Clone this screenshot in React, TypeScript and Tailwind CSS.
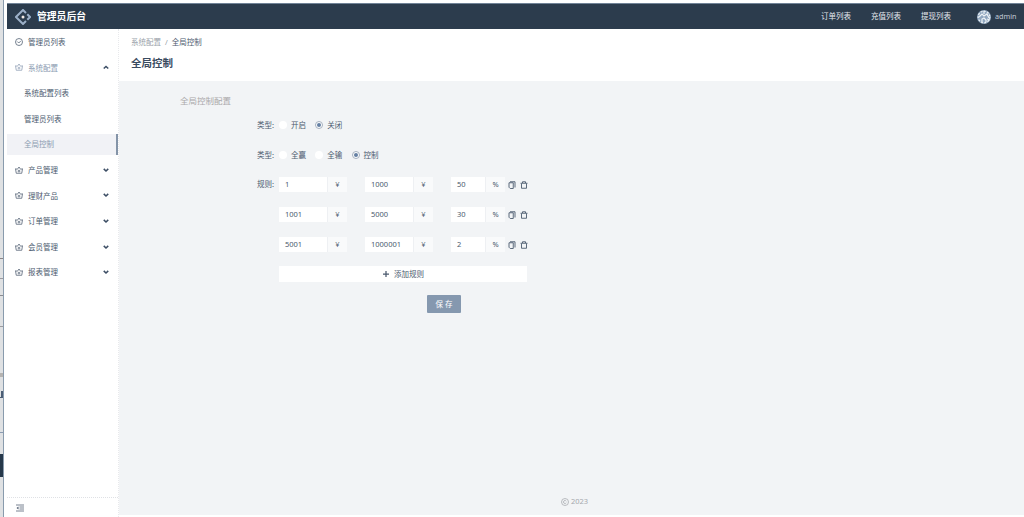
import { useState } from 'react'
import type { ReactNode } from 'react'
import clsx from 'clsx'

interface MenuItem {
  label: string
  active?: boolean
  open?: boolean
  children?: MenuItem[]
}

interface Rule {
  from: string
  to: string
  rate: string
}

const MENU: MenuItem[] = [
  {
    label: '系统配置',
    active: true,
    open: true,
    children: [
      { label: '系统配置列表' },
      { label: '管理员列表' },
      { label: '全局控制', active: true },
    ],
  },
  { label: '产品管理' },
  { label: '理财产品' },
  { label: '订单管理' },
  { label: '会员管理' },
  { label: '报表管理' },
]

const NAV = ['订单列表', '充值列表', '提现列表']

const INITIAL_RULES: Rule[] = [
  { from: '1', to: '1000', rate: '50' },
  { from: '1001', to: '5000', rate: '30' },
  { from: '5001', to: '1000001', rate: '2' },
]

function Icon({ className, children }: { className: string; children: ReactNode }) {
  return (
    <svg
      viewBox="0 0 16 16"
      fill="none"
      stroke="currentColor"
      strokeWidth="1.5"
      className={clsx('shrink-0', className)}
    >
      {children}
    </svg>
  )
}

function CrownIcon() {
  return (
    <Icon className="h-2 w-2">
      <path d="M2.5 14.5h11L15 5.5l-3.8 1L8 2 4.8 6.5 1 5.5z" />
      <circle cx="8" cy="10.2" r="1.8" />
    </Icon>
  )
}

function Chevron({ up }: { up?: boolean }) {
  return (
    <Icon className="h-1.5 w-1.5">
      <path d={up ? 'M2 12l6-5.500L14 12' : 'M2 5l6 5.500L14 5'} strokeWidth="4" />
    </Icon>
  )
}

function Header() {
  return (
    <header className="flex h-[26px] shrink-0 items-center border-t border-[#718397] bg-[#2c3c4d] pr-2 pl-2 text-[#e4e8ed]">
      <Icon className="h-4 w-4 text-[#9cb0c8]">
        <path d="M11 4L8 1 1 8l7 7 3-3M12.3 5.3L15 8l-2.7 2.7" strokeWidth="2" />
        <circle cx="8" cy="8" r="1.5" fill="#f3e9e4" stroke="none" />
      </Icon>
      <span className="ml-1.5 pt-px text-[9.8px] font-bold text-white">管理员后台</span>
      <nav className="ml-auto flex gap-5">
        {NAV.map((label) => (
          <a key={label}>{label}</a>
        ))}
      </nav>
      <div className="ml-[26px] flex w-[39px] items-center gap-1">
        <svg viewBox="0 0 14 14" className="h-3.5 w-3.5 shrink-0">
          <circle cx="7" cy="7" r="7" fill="#8fa6bf" />
          <g fill="none" stroke="#edf2f6" strokeWidth="1.2">
            <circle cx="7" cy="7" r="5.8" strokeDasharray="2 1.3" />
            <path d="M2 7l3-3 2 2 3-2 2 4M5 12V9l2-1 2 2v2M7 1v3M10 9l3 1" />
          </g>
        </svg>
        <span className="text-[7.2px] text-[#c2cbd6]">admin</span>
      </div>
    </header>
  )
}

function Sidebar() {
  return (
    <aside className="flex w-[112px] shrink-0 flex-col border-r border-dotted border-[#e8e9ec] bg-white">
      <div className="flex h-[25.6px] items-center gap-[5px] pl-2">
        <Icon className="h-2 w-2">
          <circle cx="8" cy="8" r="7" />
          <path d="M4.5 7l3 3 4-4" />
        </Icon>
        <span className="pt-0.5">管理员列表</span>
      </div>
      {MENU.map((item) => (
        <div key={item.label}>
          <div
            className={clsx(
              'flex h-[25.6px] items-center gap-[5px] pr-[9px] pl-2',
              item.active && 'text-[#8b9bb1]',
            )}
          >
            <CrownIcon />
            <span className="pt-0.5">{item.label}</span>
            <span className="ml-auto text-[#3b4d64]">
              <Chevron up={item.open} />
            </span>
          </div>
          {item.children?.map((child) => (
            <div key={child.label} className="flex h-[25.6px] items-center">
              <div
                className={clsx(
                  'flex h-[21px] w-full items-center pt-0.5 pl-[17px]',
                  child.active && 'border-r-2 border-[#8494a8] bg-[#f1f2f6] text-[#8b9bb1]',
                )}
              >
                {child.label}
              </div>
            </div>
          ))}
        </div>
      ))}
      <div className="mt-auto flex h-5 items-center border-t border-dotted border-[#dfe1e5] pl-[9px]">
        <Icon className="h-2 w-2">
          <path d="M0 2h16M7 6h9M7 10h9M0 14h16" />
          <path d="M5 5v6L1 8z" fill="currentColor" stroke="none" />
        </Icon>
      </div>
    </aside>
  )
}

function Radio({
  label,
  checked,
  onSelect,
}: {
  label: string
  checked: boolean
  onSelect: () => void
}) {
  return (
    <button onClick={onSelect} className="flex w-[36.3px] shrink-0 items-center gap-1 whitespace-nowrap">
      <span
        className={clsx(
          'flex h-2 w-2 shrink-0 items-center justify-center rounded-full bg-white',
          checked && 'border border-[#a5b0bf]',
        )}
      >
        {checked && <span className="h-1 w-1 rounded-full bg-[#6580a3]" />}
      </span>
      <span className="pt-px">{label}</span>
    </button>
  )
}

function RadioGroup({ options, initial }: { options: string[]; initial: string }) {
  const [value, setValue] = useState(initial)

  return (
    <div className="flex">
      {options.map((option) => (
        <Radio
          key={option}
          label={option}
          checked={option === value}
          onSelect={() => setValue(option)}
        />
      ))}
    </div>
  )
}

function FormRow({ label, children }: { label?: string; children: ReactNode }) {
  return (
    <div className="flex h-[29.9px] items-center">
      <div className="w-[157px] shrink-0 pt-px pr-0.5 text-right">{label && `${label}:`}</div>
      <div className="flex pl-[3px]">{children}</div>
    </div>
  )
}

function AddonInput({ value, unit, small }: { value: string; unit: string; small?: boolean }) {
  return (
    <div className="flex h-[15px]">
      <div
        className={clsx(
          'flex items-center bg-white pt-px pl-1.5',
          small ? 'w-[34px]' : 'w-12',
        )}
      >
        {value}
      </div>
      <div className="flex w-5 items-center justify-center border-l border-[#eef0f3] bg-[#f9fafb] pt-px">
        {unit}
      </div>
    </div>
  )
}

function CopyIcon() {
  return (
    <Icon className="h-2 w-2">
      <path d="M4 1.5h10V13M2 3.5h8.5V15H4.5L2 12.5z" strokeWidth="1.8" />
    </Icon>
  )
}

function TrashIcon() {
  return (
    <Icon className="h-2 w-2">
      <path d="M1 4.5h14M5 4V1.5h6V4M3 5v9.5h10V5" strokeWidth="1.8" />
    </Icon>
  )
}

export default function App() {
  const [rules, setRules] = useState(INITIAL_RULES)

  return (
    <div className="flex h-[517px] w-[1024px] overflow-hidden bg-white font-['Noto_Sans','Noto_Sans_CJK_SC',sans-serif] text-[7.5px] leading-none text-[#4b5a6e]">
      {/* Edge of the window behind */}
      <div className="flex w-1 shrink-0 flex-col border-r border-[#899bad] bg-[#dfe1e3]">
        <div className="mt-[258px] h-px bg-[#8b8587]" />
        <div className="mt-[19px] h-px bg-[#9c9ba0]" />
        <div className="mt-4 h-px bg-[#8b8b90]" />
        <div className="mt-[30px] h-px bg-[#9c9ba0]" />
        <div className="mt-[46px] h-1 bg-[#b5b3b1]" />
        <div className="mt-[14px] ml-auto h-1.5 w-0.5 bg-[#4c5e75]" />
        <div className="h-px bg-[#4c5e75]" />
        <div className="mt-[34px] h-px bg-[#8b9bb1]" />
        <div className="mt-[21px] h-[23px] bg-[#26384a]" />
      </div>

      <div className="ml-[3px] flex min-w-0 grow flex-col pt-[3px]">
        <Header />
        <div className="flex min-h-0 grow">
          <Sidebar />
          <main className="flex grow flex-col bg-[#f2f4f6]">
            <div className="h-[52px] shrink-0 bg-white pt-2.5 pl-3">
              <div className="flex gap-1 text-[#999fa9]">
                <span>系统配置</span>
                <span>/</span>
                <span className="text-[#4b5a6e]">全局控制</span>
              </div>
              <h1 className="mt-[11px] text-[10.5px] font-bold text-[#3a4b60]">全局控制</h1>
            </div>

            <div className="h-[29px] pt-4 pl-[61px] text-[8.5px] text-[#aaa8aa]">全局控制配置</div>
            <div>
              <FormRow label="类型">
                <RadioGroup options={['开启', '关闭']} initial="关闭" />
              </FormRow>
              <FormRow label="类型">
                <RadioGroup options={['全赢', '全输', '控制']} initial="控制" />
              </FormRow>
              {rules.map((rule, i) => (
                <FormRow key={i} label={i === 0 ? '规则' : undefined}>
                  <div className="flex items-center">
                    <AddonInput value={rule.from} unit="¥" />
                    <div className="ml-[18px]">
                      <AddonInput value={rule.to} unit="¥" />
                    </div>
                    <div className="ml-[18px]">
                      <AddonInput value={rule.rate} unit="%" small />
                    </div>
                    <div className="ml-[3px] flex gap-1">
                      <CopyIcon />
                      <TrashIcon />
                    </div>
                  </div>
                </FormRow>
              ))}
              <FormRow>
                <button
                  onClick={() => setRules([...rules, { from: '', to: '', rate: '' }])}
                  className="flex h-4 w-[248px] items-center justify-center gap-1 bg-white"
                >
                  <Icon className="h-2 w-2">
                    <path d="M8 2v12M2 8h12" strokeWidth="2.5" />
                  </Icon>
                  <span className="pt-px">添加规则</span>
                </button>
              </FormRow>
              <FormRow>
                <button className="ml-[148px] h-[18px] w-[34px] rounded-[1px] bg-[#8598af] text-white">
                  保 存
                </button>
              </FormRow>
            </div>

            <footer className="mt-auto flex h-[26px] items-center justify-center gap-0.5 pl-1.5 text-[#a5a8ad]">
              <Icon className="h-2 w-2">
                <circle cx="8" cy="8" r="7" />
                <path d="M10.5 6.5a3 3 0 1 0 0 3" />
              </Icon>
              2023
            </footer>
            <div className="h-0.5 shrink-0 bg-white" />
          </main>
        </div>
      </div>
    </div>
  )
}
